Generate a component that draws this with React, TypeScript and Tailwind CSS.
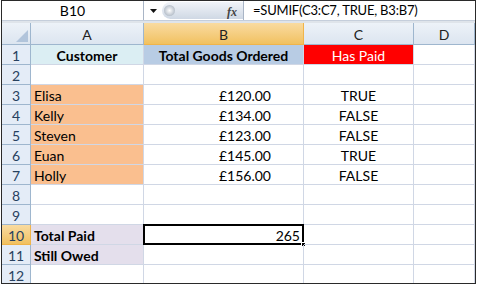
import React from 'react';

const font = { fontFamily: 'Lato, "Open Sans", sans-serif' };

type Cell = { text?: string; cls?: string };
type Row = { n: number; cells: [Cell, Cell, Cell, Cell] };

const money = 'justify-end pr-[32px]';
const center = 'justify-center';
const nameA = 'bg-[#fabf8f] pl-[3px]';

const rows: Row[] = [
  {
    n: 1,
    cells: [
      { text: 'Customer', cls: 'bg-[#dbeef3] justify-center font-bold text-[#1f497d]' },
      { text: 'Total Goods Ordered', cls: 'bg-[#b8cce4] justify-center font-bold text-[#1f497d]' },
      { text: 'Has Paid', cls: 'bg-[#ff0000] justify-center text-white' },
      {},
    ],
  },
  { n: 2, cells: [{}, {}, {}, {}] },
  { n: 3, cells: [{ text: 'Elisa', cls: nameA }, { text: '£120.00', cls: money }, { text: 'TRUE', cls: center }, {}] },
  { n: 4, cells: [{ text: 'Kelly', cls: nameA }, { text: '£134.00', cls: money }, { text: 'FALSE', cls: center }, {}] },
  { n: 5, cells: [{ text: 'Steven', cls: nameA }, { text: '£123.00', cls: money }, { text: 'FALSE', cls: center }, {}] },
  { n: 6, cells: [{ text: 'Euan', cls: nameA }, { text: '£145.00', cls: money }, { text: 'TRUE', cls: center }, {}] },
  { n: 7, cells: [{ text: 'Holly', cls: nameA }, { text: '£156.00', cls: money }, { text: 'FALSE', cls: center }, {}] },
  { n: 8, cells: [{}, {}, {}, {}] },
  { n: 9, cells: [{}, {}, {}, {}] },
  { n: 10, cells: [{ text: 'Total Paid', cls: 'bg-[#e4dfec] pl-[3px] font-bold' }, { text: '265', cls: 'justify-end pr-[3px]' }, {}, {}] },
  { n: 11, cells: [{ text: 'Still Owed', cls: 'bg-[#e4dfec] pl-[3px] font-bold' }, {}, {}, {}] },
  { n: 12, cells: [{}, {}, {}, {}] },
];

const cols = ['A', 'B', 'C', 'D'];

export default function App() {
  return (
    <div className="w-[478px] h-[287px] bg-white pl-px overflow-hidden" style={font}>
      <div className="w-[475px] h-[284px] border border-[#2a2a2a] flex flex-col overflow-hidden">
        {/* Formula bar */}
        <div className="h-[20px] flex items-stretch bg-white border-b border-[#c5cedb] shrink-0">
          <div className="w-[142px] flex items-center justify-center text-[14px] text-black border-r border-[#a9b5c6]">
            B10
          </div>
          <div className="w-[18px] flex items-center justify-center">
            <svg width="7" height="4" viewBox="0 0 7 4">
              <path d="M0 0h7L3.5 4z" fill="#111" />
            </svg>
          </div>
          <div className="w-[81px] my-[1px] rounded-l-full bg-linear-to-b from-[#f1f4f9] to-[#cfd8e4] flex items-center relative">
            <div className="w-[11px] h-[11px] ml-[2px] rounded-full bg-radial from-[#ffffff] to-[#9aa6b5]" />
            <span className="absolute right-[6px] top-[1px] text-[12px] italic font-bold text-[#444]" style={{ fontFamily: '"Liberation Serif", serif' }}>
              fx
            </span>
          </div>
          <div className="flex-1 flex items-center pl-[9px] border-l border-[#a9b5c6] text-[13px] tracking-[-0.2px] text-black whitespace-nowrap">
            =SUMIF(C3:C7, TRUE, B3:B7)
          </div>
        </div>
        <div className="h-[2px] bg-[#dfe4ea] shrink-0" />

        {/* Sheet grid */}
        <div className="grid grid-cols-[29px_113px_160px_110px_1fr] grid-rows-[22px] auto-rows-[20px] text-[14px]">
          <div className="bg-linear-to-b from-[#edf2f8] to-[#dce5f0] border-r border-b border-[#9eb6ce] flex items-end justify-end p-[2px]">
            <svg width="12" height="12" viewBox="0 0 12 12">
              <path d="M12 0V12H0z" fill="#b1c4db" />
            </svg>
          </div>
          {cols.map((c) => (
            <div
              key={c}
              className={
                c === 'B'
                  ? 'bg-linear-to-b from-[#f9dba0] to-[#f1c15f] border-r border-b border-[#f0b44a] flex items-center justify-center pt-[2px] text-[#222]'
                  : 'bg-linear-to-b from-[#edf2f8] to-[#dce5f0] border-r border-b border-[#9eb6ce] flex items-center justify-center pt-[2px] text-[#222]'
              }
            >
              {c}
            </div>
          ))}
          {rows.map((r) => (
            <React.Fragment key={r.n}>
              <div
                className={
                  r.n === 10
                    ? 'bg-linear-to-b from-[#f9dba0] to-[#f1c15f] border-r border-b border-[#f0b44a] flex items-center justify-center pt-[2px] text-[#27415f]'
                    : 'bg-[#e4ecf7] border-r border-b border-[#9eb6ce] flex items-center justify-center pt-[2px] text-[#27415f]'
                }
              >
                {r.n}
              </div>
              {r.cells.map((cell, i) => (
                <div
                  key={i}
                  className={`relative flex items-center pt-[2px] whitespace-nowrap border-r border-b border-[#d0d7e5] text-black ${cell.cls ?? ''}`}
                >
                  {cell.text}
                  {r.n === 10 && i === 1 && (
                    <>
                      <div className="absolute -left-px -top-px -right-px -bottom-px border-2 border-black pointer-events-none" />
                      <div className="absolute -right-[3px] -bottom-[3px] w-[5px] h-[5px] bg-black border border-white" />
                    </>
                  )}
                </div>
              ))}
            </React.Fragment>
          ))}
        </div>
      </div>
    </div>
  );
}
